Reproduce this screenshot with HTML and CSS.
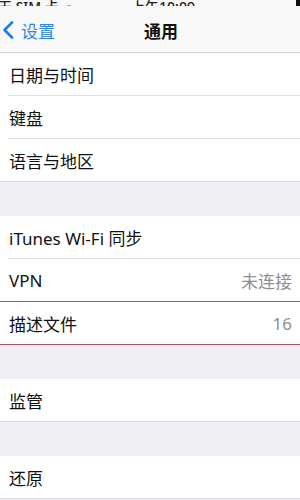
FILE: index.html
```html
<!DOCTYPE html>
<html lang="zh-CN">
<head>
<meta charset="utf-8">
<link rel="stylesheet" href="styles.css">
</head>
<body>
<div class="phone">
  <div class="status">
    <span class="carrier">无 SIM 卡 <svg class="wifi" width="10" height="8" viewBox="0 0 10 8"><path d="M5 7 L1 3 A6 6 0 0 1 9 3 Z" fill="#222"/></svg></span>
    <span class="time">上午10:09</span>
    <span class="battery"></span>
  </div>
  <div class="nav">
    <div class="back">
      <svg class="chev" width="12" height="18" viewBox="0 0 12 18"><path d="M10 1.5 L2.5 9 L10 16.5" fill="none" stroke="#1a7cf5" stroke-width="2.6" stroke-linecap="round" stroke-linejoin="round"/></svg>
      <span>设置</span>
    </div>
    <div class="title">通用</div>
  </div>

  <div class="group">
    <div class="row"><span>日期与时间</span></div>
    <div class="row"><span>键盘</span></div>
    <div class="row last"><span>语言与地区</span></div>
  </div>
  <div class="gap"></div>
  <div class="group">
    <div class="row"><span>iTunes Wi-Fi 同步</span></div>
    <div class="row red-below"><span>VPN</span><span class="detail">未连接</span></div>
    <div class="row last red-below"><span>描述文件</span><span class="detail">16</span></div>
  </div>
  <div class="gap g2"></div>
  <div class="group">
    <div class="row last"><span>监管</span></div>
  </div>
  <div class="gap g3"></div>
  <div class="group">
    <div class="row last"><span>还原</span></div>
  </div>
</div>
</body>
</html>
```
FILE: styles.css
```css
* { box-sizing: border-box; }
html, body { margin: 0; padding: 0; }
body {
  width: 300px;
  height: 500px;
  overflow: hidden;
  background: #efeff4;
  font-family: "Noto Sans", "Noto Sans CJK SC", sans-serif;
  color: #111;
}
.phone { width: 300px; }
.status {
  height: 6px;
  background: #f8f8f8;
  overflow: hidden;
  display: grid;
  grid-template-columns: 1fr auto 1fr;
  align-items: end;
}
.carrier, .time {
  font-size: 14px;
  line-height: 14px;
  font-weight: 500;
  color: #222;
  margin-bottom: -1px;
  white-space: nowrap;
}
.carrier { margin-left: -2px; }
.time { margin-left: 26px; }
.wifi { vertical-align: middle; margin-left: 2px; }
.battery {
  width: 4px;
  height: 7px;
  background: #111;
  align-self: start;
  justify-self: end;
}
.nav {
  height: 47px;
  background: #f8f8f8;
  border-bottom: 1px solid #d4d4d6;
  display: flex;
  align-items: center;
  position: relative;
  box-shadow: 0 1px 2px rgba(0,0,0,0.06);
}
.back {
  display: flex;
  align-items: center;
  color: #2c86f2;
  font-size: 17px;
  padding-left: 2px;
  gap: 7px;
  margin-top: 2px;
}
.title {
  position: absolute;
  left: 0;
  right: 0;
  text-align: center;
  font-size: 17px;
  font-weight: 700;
  pointer-events: none;
  margin-top: 2px;
  padding-left: 22px;
}
.group { background: #fff; }
.row {
  height: 43px;
  display: flex;
  align-items: center;
  justify-content: space-between;
  padding: 0 8px 0 9px;
  font-size: 17px;
  position: relative;
}
.row::after {
  content: "";
  position: absolute;
  left: 8px;
  right: 0;
  bottom: 0;
  height: 1px;
  background: #e0e0e3;
}
.row.last::after { left: 0; background: #dcdce0; }
.row.red-below::after { left: 0; background: #a8585e; height: 1px; }
.detail { color: #8e8e93; }
.gap { height: 34px; }
.g2 { height: 34px; }
.g3 { height: 34px; }
```
